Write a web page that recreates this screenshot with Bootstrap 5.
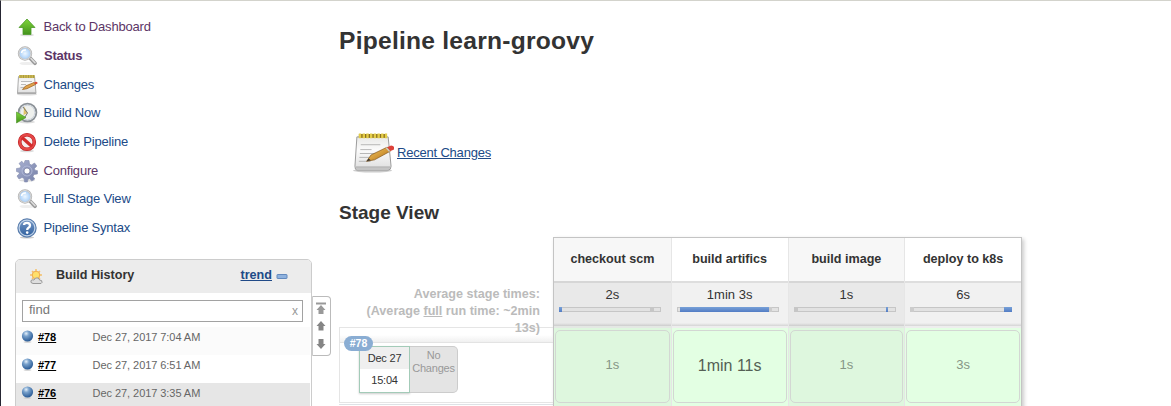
<!DOCTYPE html>
<html lang="en">
<head>
<meta charset="utf-8">
<title>learn-groovy</title>
<link href="https://cdn.jsdelivr.net/npm/bootstrap@5.3.0/dist/css/bootstrap.min.css" rel="stylesheet">
<style>
body{font:13px/18px "Liberation Sans",Arial,sans-serif;color:#333;background:#fff;overflow:hidden}
.page{height:406px;border-left:1px solid #252532;border-top:1px solid #d3d3cc;overflow:hidden}
.side{width:311px;padding:12px 0 0 14px;flex:none}
a{color:#204a87;text-decoration:none}
a.seen{color:#5c3566}
.task{height:28.7px;gap:4.5px;white-space:nowrap}
.task svg{width:24px;height:24px;flex:none}
.task a{letter-spacing:-.2px}
.task a.fw-bold{letter-spacing:-.25px;margin-left:.5px}
.history{width:297px;margin-top:16px;height:160px;border:1px solid #ccc;border-radius:5px 5px 0 0}
.history-head{height:33px;background:#ececec;border-radius:4px 4px 0 0;padding:0 23px 3px 11px}
.history-head b,.history-head a{font-size:12.6px;font-weight:bold}
.history-head b{margin-left:11px}
.find{margin:7px 8px 0 6px;height:22px;border:1px solid #a2a2a2;color:#777;padding:0 4px 3px 6px}
.find .clear{color:#999;font-size:12px;padding-top:1px}
.builds{margin-top:5px}
.build{height:28px;padding:0 0 8px 5px;margin-right:1px;font-size:11px;color:#666;letter-spacing:-.06px}
.build a{color:#000;font-weight:bold;text-decoration:underline;width:54.6px;margin-left:4px}
.pager{left:296px;top:36px;width:19px;height:60px;border:1px solid #bbb;border-left-color:#ccc;border-radius:0 4px 4px 0;background:#fff}
.main-col{padding:25px 0 0 27px;width:860px}
h1{font-size:24.6px;line-height:30px;font-weight:bold;margin:0 0 77px;letter-spacing:.24px}
h2{font-size:19px;line-height:24px;font-weight:bold;margin:28px 0 12px}
.recent{height:40px;margin-left:14px}
.recent a{text-decoration:underline;letter-spacing:-.2px;margin-left:3px}
.labels{width:214px;flex:none}
.averages{height:90px;padding:49px 13px 0 20px;text-align:right;font-weight:bold;line-height:17px;color:#bbb;font-size:12.6px;position:relative;z-index:1}
.run{height:76px;border:1px solid #e5e5e5;border-right:0;padding:18px 0 0 19px}
.run:before{content:"";position:absolute;left:0;right:0;top:0;height:15px;background:linear-gradient(#fff0 50%,#f0f0f0);border-bottom:1px solid #e3e3e3;z-index:-1}
.stamp{width:51px;height:47px;border:1px solid #a3cbb8;box-shadow:0 1px 2px #ccc;text-align:center;font-size:11px;line-height:22px;background:#fff}
.stamp div:first-child{background:#efefef}
.nochange{width:48px;height:47px;background:#e4e4e4;border:1px solid #ccc;border-left:0;border-radius:0 5px 5px 0;text-align:center;color:#999;font-size:11px;line-height:13px;padding-top:2px}
.nochange,.stamp{letter-spacing:-.2px}
.num{left:4px;top:8px;height:15px;width:29px;border-radius:8px;background:#8aadd3;color:#fff;font-size:10.5px;font-weight:bold;line-height:15px;text-align:center}
.stages{width:469px;height:180px;border:1px solid #c4c4c4;box-shadow:2px 2px 4px #ccc;display:grid;grid-template-columns:repeat(4,1fr);background:#fff}
.stage{border-left:1px solid #e6e6e6}
.stage:first-child{border-left:0}
.stage-name{height:43px;font-weight:bold;line-height:42px;text-align:center;font-size:12.6px;background:#fff}
.avg{height:47px;background:linear-gradient(#f1f1f1 40px,#d4d4d4);border-top:2px solid #dedede;border-bottom:2px solid #eee;text-align:center;padding:3px 4px 0}
.stage.odd .stage-name{background:#f7f7f7}
.stage.odd .avg{background:linear-gradient(#e9e9e9 40px,#ccc);border-top-color:#d6d6d6;border-bottom-color:#e4e8e4}
.meter{height:5px;width:102px;margin:3px 0 0 1px;border:1px solid #c6c6c6;background:#e2e2e2;position:relative}
.fill{position:absolute;top:-1px;height:5px;background:linear-gradient(#78a1d8,#527cc4)}
.result{background:#e3ffe3;height:79px;padding:2px 1px;color:#869686}
.odd .result{background:#def7de}
.result div{height:73px;border:1px solid #d3d7d3;border-radius:5px;text-align:center;line-height:67px}
.result .slow{font-size:16px;line-height:69px;color:#555f55}
</style>
</head>
<body>
<svg width="0" height="0" class="position-absolute">
<defs>
<linearGradient id="green" x2="0" y2="1"><stop stop-color="#80d63c"/><stop offset="1" stop-color="#43921c"/></linearGradient>
<linearGradient id="blue" x2="0" y2="1"><stop stop-color="#7899c6"/><stop offset="1" stop-color="#2e5f9e"/></linearGradient>
<linearGradient id="paper" x2="0" y2="1"><stop stop-color="#e9e9e7"/><stop offset=".4" stop-color="#fbfbfb"/><stop offset="1" stop-color="#ddd"/></linearGradient>
<linearGradient id="pencil" x2="1" y2="1"><stop stop-color="#f8ce65"/><stop offset="1" stop-color="#b16c14"/></linearGradient>
<linearGradient id="steel" x2="1" y2="1"><stop stop-color="#a9b1d2"/><stop offset="1" stop-color="#7680a8"/></linearGradient>
<radialGradient id="ball" cx=".38" cy=".28" r=".7"><stop stop-color="#e6f1fb"/><stop offset=".35" stop-color="#7ba3cd"/><stop offset="1" stop-color="#2b5c97"/></radialGradient>
<radialGradient id="lens"><stop stop-color="#eef7ff"/><stop offset="1" stop-color="#a0caf7"/></radialGradient>
<symbol id="up" viewBox="0 0 24 24"><ellipse cx="12" cy="20" rx="7" ry="1.3" fill="#ddd"/><path d="M12 4 20 12.5H16V19.5H8V12.5H4Z" fill="url(#green)" stroke="#4c9a28" stroke-width=".8"/></symbol>
<symbol id="search" viewBox="0 0 24 24"><ellipse cx="12" cy="19.5" rx="7.5" ry="1.6" fill="#eee"/><path d="m15 14 5 5.200" stroke="#999" stroke-width="3.800" stroke-linecap="round"/><path d="m16 14.5 4 4.2" stroke="#ddd" stroke-width="1.6" stroke-linecap="round"/><circle cx="10" cy="9.5" r="6.3" fill="url(#lens)" stroke="#b3b3b3" stroke-width="1.8"/><circle cx="10" cy="9.5" r="6" fill="none" stroke="#e5e5e5" stroke-width=".8"/><path d="M6.5 9Q7 5.5 11 6" stroke="#fff" stroke-width="1.5" fill="none"/></symbol>
<symbol id="note" viewBox="0 0 42 42"><ellipse cx="20" cy="38.5" rx="20" ry="2" fill="#ccc"/><path d="M4 4H36L39 34Q39 38 36 38H4Q2 38 2 34Z" fill="url(#paper)" stroke="#999"/><path d="M3 34H38V36.5H3Z" fill="#bbb"/><path d="M8 12H28M7.5 17H19M7 21H28M6.500 25H21M6 29H18" stroke="#b5b5b5"/><path d="M6 3H34" stroke="#8b701f" stroke-width="4"/><path d="M6 3H35" stroke="#e4cd48" stroke-width="5" stroke-dasharray="2.500 1.300"/><path d="m14 29 4.500-6.500L35 14.500 38.500 18.500 22 27.500Z" fill="url(#pencil)" stroke="#805010" stroke-width=".7"/><path d="m14 29 2-3 2.200 2Z" fill="#333"/><path d="m35 14.500 4-1.700Q43 13 42 17L38.500 18.500Z" fill="#dd4139"/><path d="m34 15 3.500 4" stroke="#ccc" stroke-width="1.400"/></symbol>
<symbol id="note-small" viewBox="0 0 24 24"><ellipse cx="12" cy="21.500" rx="10" ry="1" fill="#ddd"/><path d="M3.500 3.500H19.500L21 20.500H2.500Z" fill="url(#paper)" stroke="#aaa"/><path d="M2.500 20H21" stroke="#aaa" stroke-width="1.500"/><path d="M4 3.500H19.500" stroke="#a99a45" stroke-width="3"/><path d="M4 3.500H19.500" stroke="#ccb94f" stroke-width="3" stroke-dasharray="1.500 1"/><path d="M6 8.500H17M6 11.500H11M5.500 14.500H10" stroke="#bbb"/><path d="m7.500 16.500 3-3.500L19 9.500 20.500 11.500 12 15.700Z" fill="#e0a24b" stroke="#97601f" stroke-width=".7"/><path d="m19 9.500 1.700-.8Q23 8.500 22.500 10.500L20.500 11.500Z" fill="#d94b37"/></symbol>
<symbol id="clock" viewBox="0 0 24 24"><ellipse cx="12" cy="21" rx="8" ry="1.500" fill="#ddd"/><circle cx="12.500" cy="11.500" r="8.900" fill="#eef0ed" stroke="#8b9197" stroke-width="1.800"/><circle cx="12.500" cy="11.500" r="7.300" fill="none" stroke="#ccd3de" stroke-width="1"/><path d="M9 5.500 13 12 8.500 14Z" fill="#dec368"/><path d="m8 6 4.500 6-2.500 4" stroke="#777" fill="none"/><path d="M1.500 11 11 16.500 1.500 22Z" fill="url(#green)" stroke="#499321" stroke-width=".6"/></symbol>
<symbol id="stop" viewBox="0 0 24 24"><ellipse cx="12" cy="21" rx="7" ry="1.300" fill="#ddd"/><circle cx="12" cy="12" r="7.300" fill="#f5eeee" stroke="#b91f20" stroke-width="3.600"/><circle cx="12" cy="12" r="7.300" fill="none" stroke="#e54747" stroke-width="2.400"/><path d="m7 7.500 10 9" stroke="#d32c2c" stroke-width="3.200"/></symbol>
<symbol id="gear" viewBox="0 0 24 24"><ellipse cx="12" cy="21.500" rx="8" ry="1.200" fill="#ddd"/><path d="M10 1.500h4l.5 3.500 2 1 3-2 2.300 3-2.300 2.500.5 1.700 2.500.5v3.200l-3.500.6-1 2 1.800 2.500-3 2-2.300-2.200-1.500.4-.6 2.800H9.500L9 19.500l-2-1-3 1.500-2-3 2.300-2.200-.5-1.500L1.500 12.500V9.500L5 9l1-2-2-2.500L6.800 2.200 9 4.800Z" fill="url(#steel)" stroke="#858dae" stroke-width=".6"/><circle cx="12" cy="12" r="5" fill="none" stroke="#b1b9d8" stroke-width="1"/><circle cx="12" cy="12" r="3" fill="#fff" stroke="#727a9d" stroke-width=".7"/></symbol>
<symbol id="help" viewBox="0 0 24 24"><ellipse cx="12" cy="21.500" rx="7" ry="1" fill="#ccc"/><circle cx="12" cy="12" r="9" fill="url(#blue)" stroke="#587cac" stroke-width="1.400"/><circle cx="12" cy="12" r="7.900" fill="none" stroke="#c2d4e9" stroke-width="1.200"/><path d="M9 9Q9 6.800 12 6.800T15 9.500Q15 11 13.200 12 12.200 12.600 12.200 14" fill="none" stroke="#fff" stroke-width="2.300"/><circle cx="12.200" cy="16.600" r="1.300" fill="#fff"/></symbol>
<symbol id="orb" viewBox="0 0 12 13"><ellipse cx="6" cy="12" rx="4" ry=".8" fill="#ccc"/><circle cx="6" cy="6" r="5.600" fill="url(#ball)"/></symbol>
</defs>
</svg>
<div class="page d-flex">
<aside class="side">
<nav class="tasks">
<div class="task d-flex align-items-center"><svg><use href="#up"/></svg><a class="seen" href="#">Back to Dashboard</a></div>
<div class="task d-flex align-items-center"><svg><use href="#search"/></svg><a class="seen fw-bold" href="#">Status</a></div>
<div class="task d-flex align-items-center"><svg><use href="#note-small"/></svg><a href="#">Changes</a></div>
<div class="task d-flex align-items-center"><svg><use href="#clock"/></svg><a href="#">Build Now</a></div>
<div class="task d-flex align-items-center"><svg><use href="#stop"/></svg><a href="#">Delete Pipeline</a></div>
<div class="task d-flex align-items-center"><svg><use href="#gear"/></svg><a class="seen" href="#">Configure</a></div>
<div class="task d-flex align-items-center"><svg><use href="#search"/></svg><a href="#">Full Stage View</a></div>
<div class="task d-flex align-items-center"><svg><use href="#help"/></svg><a href="#">Pipeline Syntax</a></div>
</nav>
<section class="history position-relative">
<div class="history-head d-flex align-items-center">
<svg width="18" height="18" viewBox="0 0 18 18" class="mt-1"><path d="M9 1V13M3 7H15M5 3 13 11M13 3 5 11" stroke="#f5c16a" stroke-width="1.500"/><circle cx="9" cy="7" r="3.800" fill="#ffe06a" stroke="#efaa50"/><path d="M6 15.500Q3 15 4 12.500 5 11.500 7 12 8 9 11 10 12.500 11 12.500 12 15.500 12 15 14.500L14 15.500Z" fill="#dedede" stroke="#999"/></svg>
<b>Build History</b><a class="ms-auto text-decoration-underline" href="#">trend</a><svg class="ms-1 mt-1" width="12" height="5"><rect x="1" y=".5" width="10" height="4" rx=".5" fill="#8fb2de" stroke="#6289bd"/></svg>
</div>
<div class="find d-flex justify-content-between"><span>find</span><span class="clear">x</span></div>
<div class="builds">
<div class="build d-flex align-items-center" style="background:#fbfbfb"><svg width="13" height="13"><use href="#orb"/></svg><a href="#">#78</a>Dec 27, 2017 7:04 AM</div>
<div class="build d-flex align-items-center"><svg width="13" height="13"><use href="#orb"/></svg><a href="#">#77</a>Dec 27, 2017 6:51 AM</div>
<div class="build d-flex align-items-center" style="background:#e6e6e6"><svg width="13" height="13"><use href="#orb"/></svg><a href="#">#76</a>Dec 27, 2017 3:35 AM</div>
</div>
<div class="pager position-absolute"><svg width="17" height="58" viewBox="0 0 17 58"><path d="M3 5.500H13V7.500H3ZM8 8 12.500 13H10.500V17H5.500V13H3.500Z" fill="#999"/><path d="M8 24 12.500 29H10.500V33.500H5.500V29H3.500Z M8 52 12.500 47H10.500V42H5.500V47H3.500Z" fill="#858585"/></svg></div>
</section>
</aside>
<main class="main-col">
<h1>Pipeline learn-groovy</h1>
<div class="recent d-flex align-items-center"><svg width="41" height="41"><use href="#note"/></svg><a href="#">Recent Changes</a></div>
<h2>Stage View</h2>
<div class="d-flex">
<div class="labels">
<div class="averages">Average stage times:<br>(Average <u>full</u> run time: ~2min 13s)</div>
<div class="run position-relative z-0 d-flex"><div class="num position-absolute">#78</div><div class="stamp"><div>Dec 27</div><div>15:04</div></div><div class="nochange">No<br>Changes</div></div>
<div class="border-top" style="margin-top:1px"></div>
</div>
<div class="stages">
<div class="stage odd"><div class="stage-name">checkout scm</div><div class="avg">2s<div class="meter"><div class="fill" style="left:-1px;width:3px"></div><div class="fill" style="left:90px;width:4px;background:#c6c6c6"></div></div></div><div class="result"><div>1s</div></div></div>
<div class="stage"><div class="stage-name">build artifics</div><div class="avg">1min 3s<div class="meter"><div class="fill" style="left:2px;width:89px"></div><div class="fill" style="left:91px;width:3px;background:#ccc"></div></div></div><div class="result"><div class="slow">1min 11s</div></div></div>
<div class="stage odd"><div class="stage-name">build image</div><div class="avg">1s<div class="meter"><div class="fill" style="left:-1px;width:4px;background:#c6c6c6"></div><div class="fill" style="left:91px;width:2px"></div></div></div><div class="result"><div>1s</div></div></div>
<div class="stage"><div class="stage-name">deploy to k8s</div><div class="avg">6s<div class="meter"><div class="fill" style="left:-1px;width:4px;background:#ccc"></div><div class="fill" style="left:93px;width:8px"></div></div></div><div class="result"><div>3s</div></div></div>
</div>
</div>
</main>
</div>
<script src="https://cdn.jsdelivr.net/npm/bootstrap@5.3.0/dist/js/bootstrap.bundle.min.js"></script>
</body>
</html>
